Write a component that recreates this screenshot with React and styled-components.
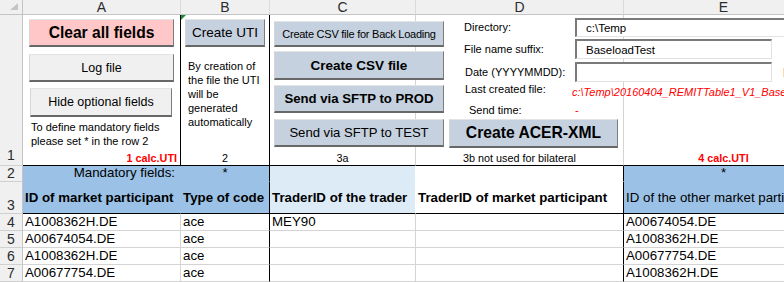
import styled, { createGlobalStyle } from "styled-components";

const GRID = "#d4d4d4";
const HEAD_LINE = "#c4c4c4";
const BLUE = "#9bc2e6";
const PALE = "#ddebf7";

const GlobalStyle = createGlobalStyle`
  html, body {
    margin: 0;
    padding: 0;
    background: #fff;
    overflow: hidden;
  }
  body {
    font-family: "Liberation Sans", Arial, sans-serif;
    color: #000;
  }
  * { box-sizing: border-box; }
`;

const Sheet = styled.div`
  display: grid;
  grid-template-columns: 23px 158px 89px 146px 208px 200px;
  grid-template-rows: 15px 151px 16px 32px repeat(4, 17px);
  width: 824px;
  background: #fff;
`;

const Corner = styled.div`
  display: flex;
  align-items: flex-end;
  justify-content: flex-end;
  padding: 0 4px 4px 0;
  background: #f0f0f0;
  border-right: 1px solid ${HEAD_LINE};
  border-bottom: 1px solid ${HEAD_LINE};
`;

const ColHead = styled.div`
  background: #f0f0f0;
  border-right: 1px solid #dadada;
  border-bottom: 1px solid ${HEAD_LINE};
  font-size: 14px;
  line-height: 14px;
  text-align: center;
  color: #2b2b2b;
`;

const RowHead = styled.div`
  display: flex;
  justify-content: center;
  align-items: ${(p) => (p.$bottom ? "flex-end" : "center")};
  padding-bottom: ${(p) => p.$pb || 0}px;
  background: #f0f0f0;
  border-right: 1px solid ${HEAD_LINE};
  border-bottom: 1px solid #d0d0d0;
  font-size: 14px;
  line-height: 15px;
  color: #2b2b2b;
`;

const ControlCell = styled.div`
  position: relative;
  z-index: ${(p) => (p.$raise ? 1 : "auto")};
  display: flex;
  flex-direction: column;
  padding-top: ${(p) => p.$top || 0}px;
  border-right: 1px solid ${(p) => p.$right || GRID};
  border-bottom: 1px solid #000;

  ${(p) =>
    p.$flag &&
    `&::before {
      content: "";
      position: absolute;
      top: 0;
      left: 0;
      border-top: 5px solid #1d8a3c;
      border-right: 5px solid transparent;
    }`}
`;

const TONES = {
  pink: "#ffc7c7",
  grey: "#f0f0f0",
  blue: "#c5d1de",
};

const MacroButton = styled.button`
  flex-shrink: 0;
  width: ${(p) => p.$w}px;
  height: ${(p) => p.$h}px;
  margin: ${(p) => p.$m || "0"};
  padding: 0;
  background: ${(p) => TONES[p.$tone]};
  border-style: solid;
  border-width: 1px 1px 2px 1px;
  border-color: #e4e4e4 #7c7c7c #686868 #d6d6d6;
  font-family: "Liberation Sans", Arial, sans-serif;
  font-size: ${(p) => p.$size}px;
  font-weight: ${(p) => (p.$bold ? 700 : 400)};
  letter-spacing: ${(p) => p.$track || 0}px;
  color: #000;
  white-space: nowrap;
  text-align: center;
  cursor: pointer;
`;

const Note = styled.div`
  margin-top: ${(p) => p.$mt}px;
  padding-left: ${(p) => p.$pl}px;
  font-size: 11px;
  line-height: 14px;
  white-space: nowrap;
`;

const Caption = styled.div`
  margin-top: auto;
  padding-right: ${(p) => p.$pr || 0}px;
  font-size: 10.8px;
  line-height: 13px;
  text-align: ${(p) => p.$align || "center"};
  color: ${(p) => (p.$red ? "#ff0000" : "#000")};
  font-weight: ${(p) => (p.$red ? 700 : 400)};
  white-space: nowrap;
`;

const Form = styled.div`
  display: grid;
  grid-template-columns: 111px 260px;
  grid-template-rows: 21px 22px 24px 17px 18px;
  margin-left: 48px;
  align-items: center;
`;

const Label = styled.div`
  padding-left: ${(p) => p.$indent || 0}px;
  margin-bottom: ${(p) => p.$lift || 0}px;
  font-size: 11px;
  line-height: 13px;
  white-space: nowrap;
`;

const Value = styled.div`
  display: flex;
  align-items: center;
  margin-left: ${(p) => p.$shift || 0}px;
`;

const Field = styled.div`
  display: flex;
  align-items: center;
  width: ${(p) => p.$w}px;
  height: ${(p) => p.$h}px;
  padding-left: 9px;
  background: #fff;
  border-style: solid;
  border-width: 2px 1px 1px 2px;
  border-color: #7a7a7a #e2e2e2 #e2e2e2 #7a7a7a;
  font-size: 11.5px;
  white-space: nowrap;
`;

const Marker = styled.span`
  width: 4px;
  height: 9px;
  margin-left: 11px;
  background: #fad9a2;
`;

const Status = styled.span`
  font-size: 11px;
  line-height: 13px;
  font-style: ${(p) => (p.$italic ? "italic" : "normal")};
  color: #ff0000;
  white-space: nowrap;
`;

const HeadCell = styled.div`
  display: flex;
  align-items: ${(p) => (p.$top ? "flex-start" : "center")};
  justify-content: ${(p) =>
    p.$align === "right" ? "flex-end" : p.$align === "center" ? "center" : "flex-start"};
  padding: ${(p) => (p.$align === "right" ? "0 5px 0 0" : p.$align === "center" ? "0" : "0 0 0 2px")};
  background: ${(p) => p.$bg};
  border-right: 1px solid ${(p) => p.$right || p.$bg};
  border-bottom: 1px solid ${(p) => p.$bottom || p.$bg};
  font-size: 13.3px;
  line-height: ${(p) => (p.$top ? 13 : 16)}px;
  font-weight: ${(p) => (p.$bold ? 700 : 400)};
  white-space: nowrap;
  overflow: ${(p) => (p.$top ? "visible" : "hidden")};
`;

const DataCell = styled.div`
  padding-left: 2px;
  border-right: 1px solid ${(p) => p.$right || GRID};
  border-bottom: 1px solid ${GRID};
  font-size: 13.3px;
  line-height: 16px;
  white-space: nowrap;
  overflow: hidden;
`;

const rows = [
  { n: 4, id: "A1008362H.DE", code: "ace", trader: "MEY90", other: "A00674054.DE" },
  { n: 5, id: "A00674054.DE", code: "ace", trader: "", other: "A1008362H.DE" },
  { n: 6, id: "A1008362H.DE", code: "ace", trader: "", other: "A00677754.DE" },
  { n: 7, id: "A00677754.DE", code: "ace", trader: "", other: "A1008362H.DE" },
];

const App = () => {
  return (
    <>
      <GlobalStyle />
      <Sheet>
        <Corner>
          <svg width="8" height="7" viewBox="0 0 8 7">
            <polygon points="8,0 8,7 0,7" fill="#c4c4c4" />
          </svg>
        </Corner>
        <ColHead>A</ColHead>
        <ColHead>B</ColHead>
        <ColHead>C</ColHead>
        <ColHead>D</ColHead>
        <ColHead>E</ColHead>

        {/* row 1: macro buttons and settings */}
        <RowHead $bottom $pb={2}>1</RowHead>
        <ControlCell $top={4} $right="#000">
          <MacroButton $tone="pink" $w={145} $h={28} $m="0 0 0 6px" $size={15.6} $bold>
            Clear all fields
          </MacroButton>
          <MacroButton $tone="grey" $w={145} $h={28} $m="7px 0 0 6px" $size={12.5}>
            Log file
          </MacroButton>
          <MacroButton $tone="grey" $w={142} $h={29} $m="6px 0 0 7px" $size={12.5}>
            Hide optional fields
          </MacroButton>
          <Note $mt={3} $pl={8}>
            To define mandatory fields
            <br />
            please set * in the row 2
          </Note>
          <Caption $align="right" $pr={3} $red>
            1 calc.UTI
          </Caption>
        </ControlCell>
        <ControlCell $top={4} $right="#000" $flag>
          <MacroButton $tone="blue" $w={80} $h={28} $m="0 0 0 4px" $size={13.5}>
            Create UTI
          </MacroButton>
          <Note $mt={12} $pl={7}>
            By creation of
            <br />
            the file the UTI
            <br />
            will be
            <br />
            generated
            <br />
            automatically
          </Note>
          <Caption>2</Caption>
        </ControlCell>
        <ControlCell $top={6}>
          <MacroButton $tone="blue" $w={170} $h={26} $m="0 0 0 4px" $size={11} $track={-0.25}>
            Create CSV file for Back Loading
          </MacroButton>
          <MacroButton $tone="blue" $w={170} $h={29} $m="4px 0 0 4px" $size={13.5} $bold>
            Create CSV file
          </MacroButton>
          <MacroButton $tone="blue" $w={170} $h={28} $m="5px 0 0 4px" $size={13.2} $bold>
            Send via SFTP to PROD
          </MacroButton>
          <MacroButton $tone="blue" $w={170} $h={28} $m="6px 0 0 4px" $size={13.1}>
            Send via SFTP to TEST
          </MacroButton>
          <Caption>3a</Caption>
        </ControlCell>
        <ControlCell $top={2} $raise>
          <Form>
            <Label>Directory:</Label>
            <Value>
              <Field $w={260} $h={19}>c:\Temp</Field>
            </Value>
            <Label>File name suffix:</Label>
            <Value>
              <Field $w={197} $h={20}>BaseloadTest</Field>
            </Value>
            <Label $indent={1}>Date (YYYYMMDD):</Label>
            <Value>
              <Field $w={197} $h={20} />
              <Marker />
            </Value>
            <Label $indent={1} $lift={6}>
              Last created file:
            </Label>
            <Value $shift={-3}>
              <Status $italic>c:\Temp\20160404_REMITTable1_V1_BaseloadTest.csv</Status>
            </Value>
            <Label $indent={5}>Send time:</Label>
            <Value>
              <Status>-</Status>
            </Value>
          </Form>
          <MacroButton $tone="blue" $w={169} $h={29} $m="0 0 0 33px" $size={15.7} $bold>
            Create ACER-XML
          </MacroButton>
          <Caption>3b not used for bilateral</Caption>
        </ControlCell>
        <ControlCell>
          <Caption $red>4 calc.UTI</Caption>
        </ControlCell>

        {/* row 2: mandatory markers */}
        <RowHead>2</RowHead>
        <HeadCell $bg={BLUE} $align="right" $top>
          Mandatory fields:
        </HeadCell>
        <HeadCell $bg={BLUE} $right="#000" $align="center" $top>
          *
        </HeadCell>
        <HeadCell $bg={PALE} $right="#fff" />
        <HeadCell $bg="#fff" $right="#000" />
        <HeadCell $bg={BLUE} $align="center" $top>
          *
        </HeadCell>

        {/* row 3: column titles */}
        <RowHead $bottom>3</RowHead>
        <HeadCell $bg={BLUE} $bottom="#000" $bold>
          ID of market participant
        </HeadCell>
        <HeadCell $bg={BLUE} $right="#000" $bottom="#000" $bold>
          Type of code
        </HeadCell>
        <HeadCell $bg={PALE} $right="#fff" $bottom="#000" $bold>
          TraderID of the trader
        </HeadCell>
        <HeadCell $bg="#fff" $right="#000" $bottom="#000" $bold>
          TraderID of market participant
        </HeadCell>
        <HeadCell $bg={BLUE} $bottom="#000">
          ID of the other market participant
        </HeadCell>

        {rows.map((r) => (
          <Row key={r.n} row={r} />
        ))}
      </Sheet>
    </>
  );
};

const Row = ({ row }) => (
  <>
    <RowHead>{row.n}</RowHead>
    <DataCell>{row.id}</DataCell>
    <DataCell $right="#000">{row.code}</DataCell>
    <DataCell>{row.trader}</DataCell>
    <DataCell $right="#000" />
    <DataCell>{row.other}</DataCell>
  </>
);

export default App;
